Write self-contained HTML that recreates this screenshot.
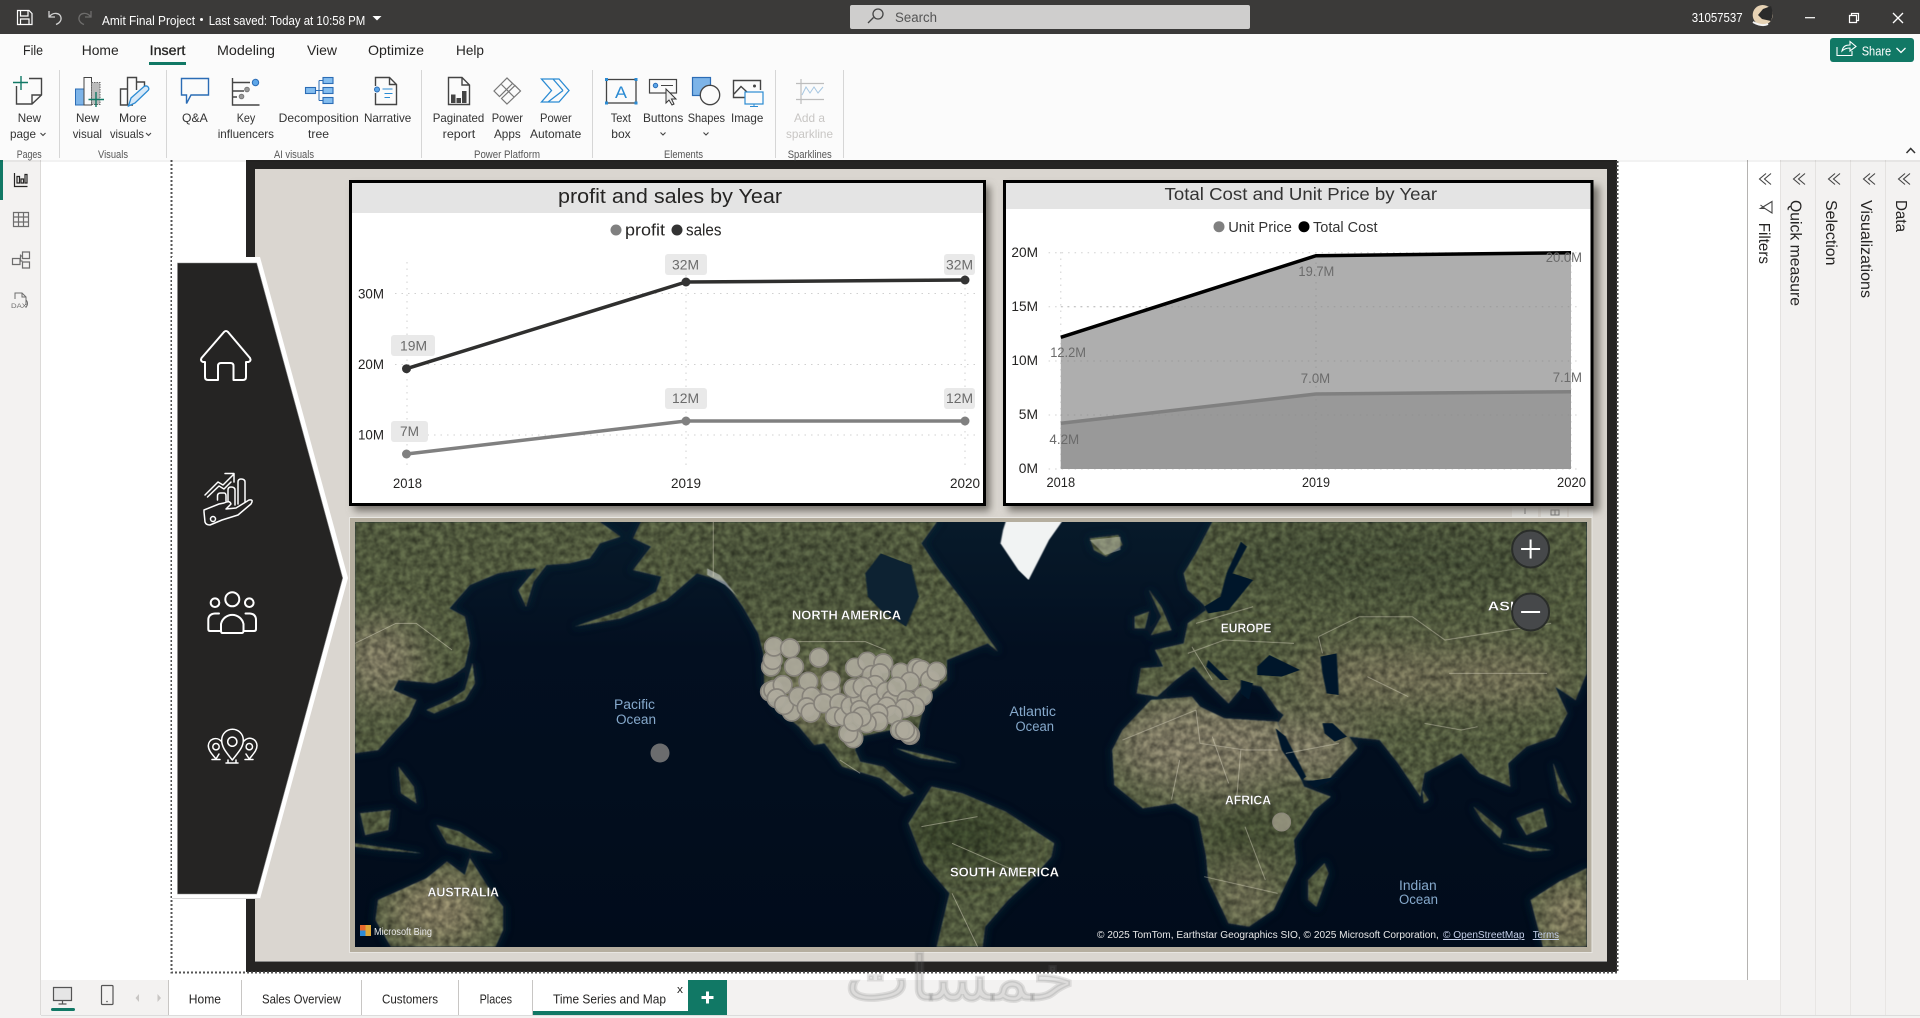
<!DOCTYPE html>
<html><head><meta charset="utf-8"><title>Power BI</title>
<style>
html,body{margin:0;padding:0;background:#fff;overflow:hidden}
svg{display:block;font-family:"Liberation Sans",sans-serif}
.w{fill:#fff;font-size:13px}
.r{fill:#333;font-size:12px}
.t{fill:#252423;font-size:14px}
.g{fill:#555;font-size:11px}
.v{fill:#252423;font-size:15.5px}
.a{fill:#252423;font-size:14px}
.d{fill:#6b6b6b;font-size:14px}
.b{fill:#fff;font-size:13px;font-weight:bold;stroke:#222;stroke-width:.2px}
.o{fill:#86a9cc;font-size:13.5px}
.c{fill:#e8e8e8;font-size:10px}
.p{fill:#252423;font-size:13px}
.ic{fill:none;stroke:#444;stroke-width:1.4}
.bl{fill:none;stroke:#2b6cb5;stroke-width:1.4}
.n{fill:none;stroke:#fff;stroke-width:2;stroke-linejoin:round;stroke-linecap:round}
.n2{fill:none;stroke:#fff;stroke-width:1.5;stroke-linejoin:round;stroke-linecap:round}
.bub circle{fill:#aeaa9c;fill-opacity:.92;stroke:#86827a;stroke-width:5}
</style></head><body>
<svg width="1920" height="1018" viewBox="0 0 1920 1018" xmlns="http://www.w3.org/2000/svg">
<defs>
<linearGradient id="oc" x1="0" y1="0" x2="0" y2="1"><stop offset="0" stop-color="#071a2a"/><stop offset=".3" stop-color="#030f20"/><stop offset="1" stop-color="#010c1b"/></linearGradient>
<filter id="bl4" x="-20%" y="-20%" width="140%" height="140%"><feGaussianBlur stdDeviation="4"/></filter>
<filter id="bl1" x="-5%" y="-5%" width="110%" height="110%"><feGaussianBlur stdDeviation="1"/></filter>
<filter id="bl20" x="-50%" y="-50%" width="200%" height="200%"><feGaussianBlur stdDeviation="18"/></filter>
<filter id="tex" x="0" y="0" width="100%" height="100%" color-interpolation-filters="sRGB">
<feTurbulence type="fractalNoise" baseFrequency=".16" numOctaves="3" seed="5" result="n"/>
<feColorMatrix in="n" type="matrix" values=".8 0 0 0 .36  .8 0 0 0 .36  .8 0 0 0 .36  0 0 0 0 1" result="g"/>
<feBlend in="SourceGraphic" in2="g" mode="multiply" result="m"/>
<feComposite in="m" in2="SourceGraphic" operator="in" result="c"/>
<feGaussianBlur in="c" stdDeviation=".6"/>
</filter>
<path id="d8" transform="translate(350,510) scale(.5102,.3333)" d="M10,36L490,36L530,80L490,100L470,145L430,160L385,165L360,215L345,290L330,240L365,175L330,180L290,190L235,225L195,295L225,320L235,400L225,470L200,500L165,520L130,515L95,510L85,540L130,570L115,620L90,660L55,720L10,730Z M150,600L195,570L225,540L240,460L245,520L225,570L165,610Z M95,770L125,830L130,880L100,850Z M20,910L80,900L75,960L30,975Z M170,945L215,965L280,1030L240,1020L190,1000Z M10,1000L100,1020L140,1030L60,1020L10,1010Z M55,1170L150,1105L190,1055L225,1095L235,1045L270,1130L300,1190L300,1260L285,1310L80,1310L50,1230Z M555,85L590,110L555,180L610,200L600,245L545,295L440,350L530,325L620,270L680,190L735,215L770,290L800,370L810,430L812,530L840,600L880,650L910,705L930,700L965,770L1040,805L1085,860L1105,850L1075,810L1045,770L1000,755L990,720L1000,680L1060,660L1085,655L1110,700L1115,650L1130,560L1170,510L1170,450L1250,400L1270,425L1240,360L1210,290L1150,170L1120,100L1150,36L570,36Z M1100,960L1095,940L1140,830L1200,850L1285,905L1380,1000L1375,1040L1340,1100L1290,1170L1245,1250L1240,1310L1150,1310L1175,1150L1125,1060Z M1070,715L1130,735L1190,760L1120,745Z"/>
<path id="d9" transform="translate(1000,510) scale(.4082,.3333)" d="M520,36L480,130L450,190L460,240L500,285L505,300L460,340L450,400L380,420L400,470L345,475L335,550L385,560L430,510L475,470L510,520L560,580L600,520L640,530L680,600L695,615L680,640L745,810L800,815L875,715L855,680L930,690L975,760L1030,860L1040,790L1130,730L1175,790L1250,830L1245,760L1290,710L1360,680L1390,610L1360,530L1410,570L1437,490L1437,36Z M275,720L300,660L370,570L470,560L490,590L550,625L680,635L745,830L810,860L770,900L720,990L725,1060L670,1200L610,1250L560,1240L510,1110L505,1040L485,920L430,880L350,895L280,825Z M755,1110L795,1060L805,1090L775,1190L755,1170Z M365,240L395,290L420,360L370,375L395,320Z M330,320L365,305L355,355L330,355Z M220,85L290,75L300,105L260,140L230,120Z M1160,890L1230,960L1225,985L1180,930Z M1265,925L1330,895L1340,950L1290,975Z M1230,1000L1350,1020L1300,1025Z M1355,760L1375,820L1400,880L1370,850Z M1300,1170L1370,1115L1437,1075L1437,1310L1330,1310Z M1035,840L1050,870L1038,880Z"/>
<clipPath id="land"><use href="#d8"/><use href="#d9"/></clipPath>
<clipPath id="mapc"><rect x="355" y="522" width="1232" height="425"/></clipPath>
</defs>

<!-- base -->
<rect width="1920" height="1018" fill="#fff"/>
<!-- right panes -->
<rect x="1780" y="160" width="140" height="855" fill="#f3f2f1"/>
<path d="M1780.500 160V1015M1815.500 160V1015M1850.500 160V1015M1885.500 160V1015" stroke="#e4e2e0"/>
<path d="M1747.500 160V980" stroke="#b5b3b1"/>
<!-- bottom strip -->
<rect x="41" y="980" width="1879" height="35" fill="#f3f2f1"/>
<path d="M1780.500 980V1015M1815.500 980V1015M1850.500 980V1015M1885.500 980V1015" stroke="#e8e6e4"/>
<rect y="1015" width="1920" height="1" fill="#dcdcdc"/><rect y="1016" width="1920" height="2" fill="#f3f2f1"/>

<!-- left nav -->
<rect y="160" width="41" height="858" fill="#f3f2f1"/><rect x="40" y="160" width="1" height="855" fill="#dcdad8"/>
<rect y="160" width="3" height="40" fill="#117865"/>
<path d="M14.500 173V186.500H27.500M17 183V176.500H19.500V183ZM21 183V179H23.500V183ZM25 183V174.500H27V183Z" fill="none" stroke="#252423" stroke-width="1.200"/>
<path d="M13.500 212.500H28.500V226.500H13.500ZM13.500 217H28.500M13.500 222H28.500M18.500 212.500V226.500M23.500 212.500V226.500" fill="none" stroke="#6d6d6d" stroke-width="1.200"/>
<path d="M12.500 258.500H20V264.500H12.500ZM22.500 252H29.500V258.500H22.500ZM22.500 262H29.500V268H22.500ZM20 261H22.500M20 256H22.500M20.500 254.500V261" fill="none" stroke="#6d6d6d" stroke-width="1.200"/>
<path d="M15 299V293H22L26 297V305M22 293V297H26M26 300C28 302 28 305 26 307" fill="none" stroke="#6d6d6d" stroke-width="1"/>
<text x="11" y="308" font-size="6.500" fill="#6d6d6d" textLength="16" lengthAdjust="spacingAndGlyphs">DAX</text>

<!-- report frame -->
<rect x="246" y="160" width="1371" height="812" fill="#252423"/>
<rect x="255" y="169" width="1352" height="793" fill="#dad6d0"/>
<rect x="255" y="961" width="1352" height="1" fill="#888"/>
<!-- dotted boundary -->
<path d="M171.500 160V972.500H1617.500V160" fill="none" stroke="#555" stroke-width="2" stroke-dasharray="2 2"/>

<!-- small headers behind map -->
<rect x="1512" y="500" width="26" height="17" fill="#e4e3e0"/><rect x="1541" y="500" width="26" height="17" fill="#e4e3e0"/><rect x="1569" y="500" width="24" height="17" fill="#e4e3e0"/>
<path d="M1525 508V514M1551 510H1559V515H1551ZM1555 510V515" stroke="#777" fill="none"/>

<!-- shadows -->
<rect x="354" y="186" width="636" height="325" fill="#74716a" filter="url(#bl4)"/>
<rect x="1008" y="186" width="591" height="325" fill="#74716a" filter="url(#bl4)"/>

<!-- chart 1 -->
<rect x="350.500" y="181.500" width="634" height="323" fill="#fff" stroke="#000" stroke-width="3"/>
<rect x="352" y="183" width="631" height="30" fill="#e4e4e4"/>
<text x="558" y="203" font-size="20" fill="#252423" textLength="224" lengthAdjust="spacingAndGlyphs">profit and sales by Year</text>
<circle cx="616" cy="230" r="5.500" fill="#808080"/><text x="625" y="235.500" font-size="16.500" fill="#252423" textLength="40" lengthAdjust="spacingAndGlyphs">profit</text>
<circle cx="677" cy="230" r="5.500" fill="#333"/><text x="686" y="235.500" font-size="16.500" fill="#252423" textLength="35.500" lengthAdjust="spacingAndGlyphs">sales</text>
<path d="M395 293.500H975M395 364.500H975M395 435H975M407 262V470M686 262V470M965 262V470" stroke="#d0d0d0" stroke-dasharray="1.500 5"/>
<g class="a">
<text x="358" y="298.500" textLength="26" lengthAdjust="spacingAndGlyphs">30M</text>
<text x="358" y="369" textLength="26" lengthAdjust="spacingAndGlyphs">20M</text>
<text x="358" y="439.500" textLength="26" lengthAdjust="spacingAndGlyphs">10M</text>
<text x="393" y="488" textLength="29" lengthAdjust="spacingAndGlyphs">2018</text>
<text x="671" y="488" textLength="30" lengthAdjust="spacingAndGlyphs">2019</text>
<text x="950" y="488" textLength="30" lengthAdjust="spacingAndGlyphs">2020</text>
</g>
<polyline points="406.500,368.700 686,282 965,280" fill="none" stroke="#2f2f2e" stroke-width="3.500"/>
<polyline points="406.500,454 686,421 965,421" fill="none" stroke="#808080" stroke-width="3.500"/>
<g fill="#333"><circle cx="406.500" cy="368.700" r="4.500"/><circle cx="686" cy="282" r="4.500"/><circle cx="965" cy="280" r="4.500"/></g>
<g fill="#808080"><circle cx="406.500" cy="454" r="4.500"/><circle cx="686" cy="421" r="4.500"/><circle cx="965" cy="421" r="4.500"/></g>
<g fill="#e9e9e9">
<rect x="391" y="335" width="44" height="21" rx="3"/><rect x="391" y="421" width="37" height="21" rx="3"/>
<rect x="665" y="254" width="42" height="21" rx="3"/><rect x="944" y="254" width="31" height="21" rx="3"/>
<rect x="665" y="388" width="42" height="21" rx="3"/><rect x="944" y="388" width="31" height="21" rx="3"/>
</g>
<g class="d">
<text x="400" y="350.500" textLength="27" lengthAdjust="spacingAndGlyphs">19M</text>
<text x="400" y="436" textLength="19" lengthAdjust="spacingAndGlyphs">7M</text>
<text x="672" y="269.500" textLength="27" lengthAdjust="spacingAndGlyphs">32M</text>
<text x="946" y="269.500" textLength="27" lengthAdjust="spacingAndGlyphs">32M</text>
<text x="672" y="403" textLength="27" lengthAdjust="spacingAndGlyphs">12M</text>
<text x="946" y="403" textLength="27" lengthAdjust="spacingAndGlyphs">12M</text>
</g>

<!-- chart 2 -->
<rect x="1004.500" y="181.500" width="587.500" height="323" fill="#fff" stroke="#000" stroke-width="3"/>
<rect x="1006" y="183" width="584.500" height="26" fill="#e4e4e4"/>
<text x="1164.500" y="200" font-size="17.500" fill="#333" textLength="272.600" lengthAdjust="spacingAndGlyphs">Total Cost and Unit Price by Year</text>
<circle cx="1219" cy="226.700" r="5.500" fill="#808080"/><text x="1228.200" y="232" font-size="15" fill="#333" textLength="63.700" lengthAdjust="spacingAndGlyphs">Unit Price</text>
<circle cx="1304" cy="226.700" r="5.500" fill="#000"/><text x="1313" y="232" font-size="15" fill="#333" textLength="64.500" lengthAdjust="spacingAndGlyphs">Total Cost</text>
<path d="M1048.600 252.700H1580M1048.600 306.700H1580M1048.600 361H1580M1048.600 415H1580M1048.600 469H1580M1060.800 252V469M1316 252V469M1571 252V469" stroke="#d0d0d0" stroke-dasharray="1.500 5"/>
<polygon points="1060.800,469 1060.800,337.300 1316,255.700 1571,252.700 1571,469" fill="#aeaeae"/>
<polygon points="1060.800,469 1060.800,423.300 1316,394 1571,391.700 1571,469" fill="#999"/>
<path d="M1060.800 306.700H1571M1060.800 361H1571M1060.800 415H1571M1316 256V469" stroke="#8a8a8a" stroke-opacity=".55" stroke-dasharray="1.500 5"/>
<polyline points="1060.800,337.300 1316,255.700 1571,252.700" fill="none" stroke="#000" stroke-width="3.500"/>
<polyline points="1060.800,423.300 1316,394 1571,391.700" fill="none" stroke="#808080" stroke-width="3.500"/>
<g class="a">
<text x="1011.400" y="257" textLength="26.600" lengthAdjust="spacingAndGlyphs">20M</text>
<text x="1011.400" y="311" textLength="26.600" lengthAdjust="spacingAndGlyphs">15M</text>
<text x="1011.400" y="365" textLength="26.600" lengthAdjust="spacingAndGlyphs">10M</text>
<text x="1018.800" y="419" textLength="19.200" lengthAdjust="spacingAndGlyphs">5M</text>
<text x="1018.800" y="473" textLength="19.200" lengthAdjust="spacingAndGlyphs">0M</text>
<text x="1046.500" y="487" textLength="28.600" lengthAdjust="spacingAndGlyphs">2018</text>
<text x="1302" y="487" textLength="28" lengthAdjust="spacingAndGlyphs">2019</text>
<text x="1557" y="487" textLength="29" lengthAdjust="spacingAndGlyphs">2020</text>
</g>
<g class="d">
<text x="1050.200" y="357" textLength="35.800" lengthAdjust="spacingAndGlyphs">12.2M</text>
<text x="1298.400" y="276" textLength="35.900" lengthAdjust="spacingAndGlyphs">19.7M</text>
<text x="1545.700" y="262" textLength="36.300" lengthAdjust="spacingAndGlyphs">20.0M</text>
<text x="1300.800" y="383" textLength="29.400" lengthAdjust="spacingAndGlyphs">7.0M</text>
<text x="1552.700" y="382" textLength="29.300" lengthAdjust="spacingAndGlyphs">7.1M</text>
<text x="1049.400" y="444" textLength="29.800" lengthAdjust="spacingAndGlyphs">4.2M</text>
</g>

<!-- nav polygon -->
<polygon points="172,257 260,257 348,578 260,899 172,899" fill="#fff"/>
<path d="M172 898.500H260" stroke="#d8d8d8"/>
<polygon points="177.500,263 256.700,263 342.700,578 256.700,894 177.500,894" fill="#252423" stroke="#8a8a8a" stroke-width=".6"/>
<path class="n" d="M205 362H203Q200 361 201.500 358L224 332Q226 330 228 332L250 358Q251.500 361 248.500 362H246V377Q246 380 243 380H233.500V366Q233.500 363 230.500 363H221Q218 363 218 366V380H208Q205 380 205 377Z"/>
<g class="n2">
<path d="M205 495L218 482L223 485L234 474M225 473.500H234V482"/>
<path d="M207.500 497L219 486L224 489L231 482"/>
<path d="M217.500 500V496Q217.500 493 220.500 493H224Q226 493 226 496V501"/>
<path d="M228 501V490Q228 487 231 487Q235 487 235 490V505"/>
<path d="M238 504V482Q238 479 241 479Q245 479 245 482V502"/>
<path d="M204 510L219 504L224 503Q230 500 231 504L226 509L236 508L249 500Q254 499 251 504L238 515L222 520L210 525Q206 525 205 522L204 512Z"/>
<circle cx="213" cy="519" r="2.500"/>
</g>
<g class="n">
<circle cx="232.300" cy="599.300" r="7"/><circle cx="215" cy="602.700" r="4.300"/><circle cx="249.300" cy="602.700" r="4.300"/>
<path d="M222 633H242Q243.500 633 243.500 630V624A11.500 11.500 0 0 0 221 624V630Q221 633 222 633Z"/>
<path d="M221 631H210Q208.300 631 208.300 629V620Q208.300 614 215 613.500H219"/>
<path d="M243.500 631H254Q256 631 256 629V620Q256 614 250 613.500H245.500"/>
</g>
<g class="n2">
<path d="M232.300 760C226 752 221.500 747 221.700 740A10.800 10.800 0 0 1 243.300 740C243.500 747 238.500 752 232.300 760Z"/>
<circle cx="232.300" cy="741.700" r="4.600"/>
<path d="M216 759C211 753 208.300 750 208.300 745.500A7.300 7.300 0 0 1 221 741M216 759L219 754"/>
<circle cx="216" cy="746.700" r="3.200"/>
<path d="M249.300 759C254 753 257 750 257 745.500A7.300 7.300 0 0 0 244 741M249.300 759L246 754"/>
<circle cx="249.300" cy="746.700" r="3.200"/>
<path d="M226 763H238M228 760V763M236 760V763M212 759.500H220M245 759.500H253"/>
</g>

<!-- map frame -->
<rect x="349.500" y="517.500" width="1242.500" height="435" fill="#b5ae9f" stroke="#e8e6e2"/>
<g clip-path="url(#mapc)">
<rect x="355" y="522" width="1232" height="425" fill="url(#oc)"/>
<g filter="url(#bl4)" stroke="#102636" fill="#102636" opacity=".7" style="stroke-width:12px"><use href="#d8"/><use href="#d9"/></g>
<g filter="url(#tex)">
<g clip-path="url(#land)">
<rect x="355" y="522" width="1232" height="425" fill="#697450"/>
<g filter="url(#bl20)">
<ellipse cx="1205" cy="745" rx="95" ry="48" fill="#a09a7e"/>
<ellipse cx="1318" cy="750" rx="40" ry="30" fill="#a09a7e"/>
<ellipse cx="1390" cy="677" rx="100" ry="28" fill="#928d6d"/>
<ellipse cx="1490" cy="677" rx="80" ry="28" fill="#928d6d"/>
<ellipse cx="439" cy="910" rx="50" ry="35" fill="#a99f7c"/>
<ellipse cx="1570" cy="915" rx="30" ry="35" fill="#a99f7c"/>
<ellipse cx="380" cy="660" rx="40" ry="40" fill="#a09a7c"/>
<ellipse cx="810" cy="700" rx="40" ry="30" fill="#8f8c6c"/>
<ellipse cx="1245" cy="895" rx="30" ry="30" fill="#8f8c6c"/>
<ellipse cx="962" cy="835" rx="60" ry="30" fill="#465434"/>
<ellipse cx="1242" cy="830" rx="35" ry="25" fill="#505c3b"/>
<ellipse cx="1390" cy="560" rx="170" ry="35" fill="#5a6647"/>
<ellipse cx="800" cy="570" rx="110" ry="35" fill="#616c4b"/>
</g>
</g></g>
<!-- seas -->
<g fill="#06182a" filter="url(#bl1)" transform="translate(1000,510) scale(.4082,.3333)">
<path d="M630,470L660,435L735,480L690,500L630,495Z"/>
<path d="M785,440L825,430L830,555L800,550L790,490Z"/>
<path d="M555,190L590,95L605,110L570,190L620,210L560,300L510,310L500,290L540,260Z"/>
<path d="M790,640L815,640L850,680L820,695L795,670Z"/>
<path d="M510,450L560,510L540,510L505,470Z"/>
<path d="M590,510L620,520L610,570L590,550Z"/>
<path d="M675,655L700,680L750,800L740,810L690,720Z"/>
<path d="M750,815L830,800L770,835Z"/>
</g>
<g filter="url(#bl1)" transform="translate(350,510) scale(.5102,.3333)">
<path d="M1010,190L1040,130L1100,165L1115,260L1090,350L1040,300L1015,260Z" fill="#0a2030"/>
<path d="M1285,36L1395,36L1370,90L1330,210L1310,180L1275,100L1280,60Z" fill="#f1f3f3"/>
<path d="M1450,90L1510,80L1510,120L1480,135Z" fill="#d8d8c8" opacity=".4"/>
<path d="M700,175L725,195L760,260L735,225L700,195Z" fill="#d9dcdc" opacity=".55"/>
</g>
<g fill="none" stroke="#ddd9c5" stroke-opacity=".45" stroke-width="1">
<g transform="translate(1000,510) scale(.4082,.3333)">
<path vector-effect="non-scaling-stroke" d="M300,690L480,600M480,600L490,700L600,720L680,720M440,750L420,870M590,720L580,860M500,1100L680,1150M600,950L650,1110M780,380L880,320L1010,320L1090,390L1350,340M780,380L790,430M900,500L1000,560M1040,640L1130,660L1170,650M460,430L550,390L720,400M480,340L620,290M520,680L560,820M700,730L830,700M1100,490L1340,490M470,410L520,510"/>
</g>
<g transform="translate(350,510) scale(.5102,.3333)">
<path vector-effect="non-scaling-stroke" d="M712,36L712,200M870,395L1010,395L1050,420M1120,950L1230,920M1180,1000L1300,1080M1180,1150L1230,1310M10,400L90,340L130,340L200,420M960,750L1000,790"/>
</g>
</g>
<!-- labels -->
<text class="b" x="792" y="619.500" textLength="109" lengthAdjust="spacingAndGlyphs">NORTH AMERICA</text>
<text class="b" x="1220.800" y="632.500" textLength="50.600" lengthAdjust="spacingAndGlyphs">EUROPE</text>
<text class="b" x="1225" y="804.500" textLength="46" lengthAdjust="spacingAndGlyphs">AFRICA</text>
<text class="b" x="1487.800" y="610.500" textLength="38" lengthAdjust="spacingAndGlyphs">ASIA</text>
<text class="b" x="950" y="876.500" textLength="109" lengthAdjust="spacingAndGlyphs">SOUTH AMERICA</text>
<text class="b" x="427.500" y="896.500" textLength="71.500" lengthAdjust="spacingAndGlyphs">AUSTRALIA</text>
<g class="o">
<text x="614" y="709" textLength="41" lengthAdjust="spacingAndGlyphs">Pacific</text>
<text x="616" y="724" textLength="40" lengthAdjust="spacingAndGlyphs">Ocean</text>
<text x="1009.400" y="716" textLength="46.600" lengthAdjust="spacingAndGlyphs">Atlantic</text>
<text x="1015.500" y="731" textLength="38.500" lengthAdjust="spacingAndGlyphs">Ocean</text>
<text x="1399" y="890" textLength="37.700" lengthAdjust="spacingAndGlyphs">Indian</text>
<text x="1399" y="904" textLength="39" lengthAdjust="spacingAndGlyphs">Ocean</text>
</g>
<!-- bubbles -->
<circle cx="660" cy="753" r="9.500" fill="#777" fill-opacity=".9"/>
<circle cx="1281.600" cy="822" r="9" fill="#a5a18f" fill-opacity=".75" stroke="#8a867a"/>
<g class="bub" transform="translate(760,620) scale(.3333)">
<circle cx="33" cy="140" r="28"/><circle cx="38" cy="120" r="28"/><circle cx="42" cy="80" r="28"/><circle cx="90" cy="85" r="28"/><circle cx="177" cy="113" r="28"/><circle cx="102" cy="140" r="28"/><circle cx="145" cy="185" r="28"/><circle cx="212" cy="212" r="28"/><circle cx="212" cy="182" r="28"/><circle cx="285" cy="143" r="28"/><circle cx="322" cy="125" r="28"/><circle cx="370" cy="130" r="28"/><circle cx="335" cy="165" r="28"/><circle cx="360" cy="160" r="28"/><circle cx="422" cy="158" r="28"/><circle cx="470" cy="145" r="28"/><circle cx="485" cy="150" r="28"/><circle cx="450" cy="185" r="28"/><circle cx="510" cy="180" r="28"/><circle cx="530" cy="155" r="28"/><circle cx="345" cy="195" r="28"/><circle cx="488" cy="228" r="28"/><circle cx="30" cy="215" r="28"/><circle cx="40" cy="210" r="28"/><circle cx="68" cy="195" r="28"/><circle cx="50" cy="235" r="28"/><circle cx="95" cy="275" r="28"/><circle cx="72" cy="255" r="28"/><circle cx="115" cy="230" r="28"/><circle cx="155" cy="230" r="28"/><circle cx="140" cy="262" r="28"/><circle cx="152" cy="278" r="28"/><circle cx="190" cy="250" r="28"/><circle cx="238" cy="250" r="28"/><circle cx="225" cy="290" r="28"/><circle cx="252" cy="290" r="28"/><circle cx="272" cy="258" r="28"/><circle cx="300" cy="235" r="28"/><circle cx="280" cy="205" r="28"/><circle cx="308" cy="200" r="28"/><circle cx="330" cy="225" r="28"/><circle cx="350" cy="250" r="28"/><circle cx="378" cy="215" r="28"/><circle cx="395" cy="240" r="28"/><circle cx="410" cy="200" r="28"/><circle cx="440" cy="240" r="28"/><circle cx="465" cy="260" r="28"/><circle cx="432" cy="265" r="28"/><circle cx="380" cy="260" r="28"/><circle cx="400" cy="285" r="28"/><circle cx="300" cy="270" r="28"/><circle cx="355" cy="280" r="28"/><circle cx="355" cy="305" r="28"/><circle cx="320" cy="310" r="28"/><circle cx="305" cy="290" r="28"/><circle cx="280" cy="355" r="28"/><circle cx="265" cy="340" r="28"/><circle cx="280" cy="305" r="28"/><circle cx="450" cy="345" r="28"/><circle cx="445" cy="340" r="28"/><circle cx="420" cy="330" r="28"/><circle cx="435" cy="330" r="28"/>
</g>
<!-- attribution -->
<rect x="360" y="925" width="5.500" height="5.500" fill="#e8692d"/><rect x="365.500" y="925" width="5.500" height="5.500" fill="#e0a838"/><rect x="360" y="930.500" width="5.500" height="5.500" fill="#2e8bd6"/><rect x="365.500" y="930.500" width="5.500" height="5.500" fill="#e0a838"/>
<text x="374" y="935" fill="#e8e8e8" font-size="10.500" textLength="58" lengthAdjust="spacingAndGlyphs">Microsoft Bing</text>
<text class="c" x="1097" y="938" textLength="341.800" lengthAdjust="spacingAndGlyphs">© 2025 TomTom, Earthstar Geographics SIO, © 2025 Microsoft Corporation,</text>
<text class="c" x="1443" y="938" textLength="81.500" lengthAdjust="spacingAndGlyphs" text-decoration="underline" style="fill:#c5d0ea">© OpenStreetMap</text>
<text class="c" x="1532.700" y="938" textLength="26.300" lengthAdjust="spacingAndGlyphs" text-decoration="underline" style="fill:#c5d0ea">Terms</text>
<!-- zoom buttons -->
<circle cx="1530.600" cy="549" r="18.500" fill="#46484a" stroke="#2a2d2a" stroke-width="2"/>
<path d="M1530.600 539.500V558.500M1521.100 549H1540.100" stroke="#fff" stroke-width="2"/>
<circle cx="1530.600" cy="612" r="18.500" fill="#46484a" stroke="#2a2d2a" stroke-width="2"/>
<path d="M1521.100 612H1540.100" stroke="#fff" stroke-width="2"/>
</g>

<!-- title bar -->
<rect width="1920" height="34" fill="#3b3a39"/>
<path d="M17.500 10.500H29L32 13.500V24.500H17.500ZM20.500 10.500V16H28V10.500M20.500 24.500V19H29V24.500" fill="none" stroke="#fff" stroke-width="1.200"/>
<path d="M49 11V17H55M49.500 16.500C53 12 60 12.500 61 17.500C61.500 20 60 23 56 24.500" fill="none" stroke="#d0d0d0" stroke-width="1.300"/>
<path d="M91 11V17H85M90.500 16.500C87 12 80 12.500 79 17.500C78.500 20 80 23 84 24.500" fill="none" stroke="#6e6d6c" stroke-width="1.300"/>
<text class="w" x="102" y="25" textLength="93" lengthAdjust="spacingAndGlyphs">Amit Final Project</text>
<circle cx="201.500" cy="19.500" r="1.500" fill="#fff"/>
<text class="w" x="208.700" y="25" textLength="156.600" lengthAdjust="spacingAndGlyphs">Last saved: Today at 10:58 PM</text>
<polygon points="372.500,16 381.500,16 377,20.500" fill="#fff"/>
<rect x="850" y="5" width="400" height="24" rx="2" fill="#cfcecd"/>
<path d="M868 23L873.500 17.500" stroke="#444" stroke-width="1.300"/><circle cx="878" cy="14" r="5" fill="none" stroke="#444" stroke-width="1.300"/>
<text x="895" y="22" font-size="13.500" fill="#555" textLength="42" lengthAdjust="spacingAndGlyphs">Search</text>
<text class="w" x="1691.700" y="22" textLength="51" lengthAdjust="spacingAndGlyphs">31057537</text>
<circle cx="1762.700" cy="15" r="10" fill="#e6d2b4"/><path d="M1763 9L1771 6Q1774 14 1771 21L1762 19L1758 15Z" fill="#2a2a2a"/><path d="M1753 22Q1762 27 1768 24" stroke="#f4f4f4" stroke-width="2" fill="none"/>
<path d="M1805 17.700H1815" stroke="#fff" stroke-width="1.200"/>
<path d="M1849.500 15.500H1856.500V22.500H1849.500ZM1851.500 15.500V13.500H1858.500V20.500H1856.500" fill="none" stroke="#fff" stroke-width="1.200"/>
<path d="M1893 13L1903 23M1903 13L1893 23" stroke="#fff" stroke-width="1.300"/>

<!-- ribbon -->
<rect y="34" width="1920" height="126" fill="#fbfbfb"/>
<rect y="160" width="1920" height="2" fill="#000" opacity=".05"/>
<g class="t">
<text x="23" y="55" textLength="20" lengthAdjust="spacingAndGlyphs">File</text>
<text x="81.700" y="55" textLength="37" lengthAdjust="spacingAndGlyphs">Home</text>
<text x="149.700" y="55" textLength="35.600" lengthAdjust="spacingAndGlyphs" stroke="#252423" stroke-width=".3">Insert</text>
<text x="217" y="55" textLength="58" lengthAdjust="spacingAndGlyphs">Modeling</text>
<text x="307" y="55" textLength="30" lengthAdjust="spacingAndGlyphs">View</text>
<text x="368" y="55" textLength="56" lengthAdjust="spacingAndGlyphs">Optimize</text>
<text x="456" y="55" textLength="28" lengthAdjust="spacingAndGlyphs">Help</text>
</g>
<rect x="149" y="62" width="37" height="3" fill="#117865"/>
<rect x="1830" y="38" width="84" height="24" rx="3" fill="#117865"/>
<path d="M1837 47V55.500H1852V51M1842 51C1843 46 1846 45 1850 45V41.500L1856 46.500L1850 51V48C1846 48 1844 49 1842 51Z" fill="none" stroke="#fff" stroke-width="1.100"/>
<text x="1861.700" y="55.500" font-size="13" fill="#fff" textLength="29.500" lengthAdjust="spacingAndGlyphs">Share</text>
<path d="M1896.500 48L1901 52.500L1905.500 48" fill="none" stroke="#fff" stroke-width="1.300"/>
<path d="M1906.500 153L1910.700 148.500L1915 153" fill="none" stroke="#333" stroke-width="1.500"/>
<path d="M59.500 70V158M166.500 70V158M421.500 70V158M592.500 70V158M775.500 70V158M843.500 70V158" stroke="#d6d6d6"/>

<g class="r">
<text x="17.700" y="122" textLength="23.300" lengthAdjust="spacingAndGlyphs">New</text>
<text x="10" y="138" textLength="26" lengthAdjust="spacingAndGlyphs">page</text>
<text x="76" y="122" textLength="23.300" lengthAdjust="spacingAndGlyphs">New</text>
<text x="72.700" y="138" textLength="29.300" lengthAdjust="spacingAndGlyphs">visual</text>
<text x="119" y="122" textLength="27.700" lengthAdjust="spacingAndGlyphs">More</text>
<text x="110" y="138" textLength="34" lengthAdjust="spacingAndGlyphs">visuals</text>
<text x="182" y="122" textLength="25.700" lengthAdjust="spacingAndGlyphs">Q&amp;A</text>
<text x="236.700" y="122" textLength="18.600" lengthAdjust="spacingAndGlyphs">Key</text>
<text x="217.700" y="138" textLength="56.300" lengthAdjust="spacingAndGlyphs">influencers</text>
<text x="278.700" y="122" textLength="80" lengthAdjust="spacingAndGlyphs">Decomposition</text>
<text x="308" y="138" textLength="21" lengthAdjust="spacingAndGlyphs">tree</text>
<text x="364" y="122" textLength="47.300" lengthAdjust="spacingAndGlyphs">Narrative</text>
<text x="432.700" y="122" textLength="51.600" lengthAdjust="spacingAndGlyphs">Paginated</text>
<text x="442.700" y="138" textLength="32.600" lengthAdjust="spacingAndGlyphs">report</text>
<text x="491.700" y="122" textLength="31.300" lengthAdjust="spacingAndGlyphs">Power</text>
<text x="494" y="138" textLength="26.700" lengthAdjust="spacingAndGlyphs">Apps</text>
<text x="540" y="122" textLength="31.700" lengthAdjust="spacingAndGlyphs">Power</text>
<text x="530" y="138" textLength="51.300" lengthAdjust="spacingAndGlyphs">Automate</text>
<text x="610.700" y="122" textLength="20.300" lengthAdjust="spacingAndGlyphs">Text</text>
<text x="611.300" y="138" textLength="19.400" lengthAdjust="spacingAndGlyphs">box</text>
<text x="643" y="122" textLength="40.300" lengthAdjust="spacingAndGlyphs">Buttons</text>
<text x="687.700" y="122" textLength="37.300" lengthAdjust="spacingAndGlyphs">Shapes</text>
<text x="731" y="122" textLength="32.300" lengthAdjust="spacingAndGlyphs">Image</text>
<text x="794" y="122" textLength="31" lengthAdjust="spacingAndGlyphs" style="fill:#c8c6c4">Add a</text>
<text x="786" y="138" textLength="47" lengthAdjust="spacingAndGlyphs" style="fill:#c8c6c4">sparkline</text>
</g>
<path d="M40.500 133L43 135.500L45.500 133M146 133L148.500 135.500L151 133M660.500 132.500L663 135L665.500 132.500M703.500 132.500L706 135L708.500 132.500" fill="none" stroke="#444" stroke-width="1.100"/>
<g class="g">
<text x="16.700" y="158" textLength="25" lengthAdjust="spacingAndGlyphs">Pages</text>
<text x="98" y="158" textLength="30" lengthAdjust="spacingAndGlyphs">Visuals</text>
<text x="274" y="158" textLength="40" lengthAdjust="spacingAndGlyphs">AI visuals</text>
<text x="474" y="158" textLength="66" lengthAdjust="spacingAndGlyphs">Power Platform</text>
<text x="664" y="158" textLength="39" lengthAdjust="spacingAndGlyphs">Elements</text>
<text x="787.700" y="158" textLength="44" lengthAdjust="spacingAndGlyphs">Sparklines</text>
</g>

<!-- ribbon icons -->
<path class="ic" d="M29 78.500H41.500V95L32 104H16.500V86M32 104V95H41.500"/>
<path d="M21 76V90M13 82.500H28" stroke="#117865" stroke-width="1.400"/>
<rect x="75.500" y="89" width="8.500" height="16" fill="#7db4e8" stroke="#2b6cb5"/>
<rect x="84" y="77.500" width="7.500" height="27.500" fill="#fbfbfb" stroke="#444"/>
<rect x="91.500" y="82.500" width="8.500" height="22" fill="#bbb" stroke="#666" stroke-dasharray="1.500 1"/>
<path d="M96 92V107M88.500 99.500H104" stroke="#117865" stroke-width="1.400"/>
<path class="ic" d="M120.500 105V89H127.500V105ZM127.500 105V77.500H136.500V90M136.500 82H144.500V88M128 105H133"/>
<path d="M128.500 106L131 98L144 86.500Q147 85 148.500 87.500Q149.500 89.500 147.500 91L135 103Z" fill="#d8e9f8" stroke="#2b8bd3" stroke-width="1.300"/>
<path class="bl" d="M181.500 78.500H208.500V95H191L186.500 103.500V95H181.500Z"/>
<path class="ic" d="M232.500 78V105H259.500M232.500 82.500H250M232.500 91H244M232.500 97H237"/>
<circle cx="255.500" cy="82.500" r="3.200" fill="#5da6e8" stroke="#2b6cb5"/><circle cx="247" cy="89.500" r="2.300" fill="#999" stroke="#777"/><circle cx="241.500" cy="96.500" r="2.300" fill="#999" stroke="#777"/>
<g fill="#83bdef" stroke="#2b6cb5" stroke-width="1.100"><rect x="305.500" y="87.500" width="10" height="6"/><rect x="323" y="77.500" width="10" height="6"/><rect x="323" y="87.500" width="10" height="6"/><rect x="323" y="97.500" width="10" height="6"/></g>
<path d="M315.500 90.500H323M319 80.500V100.500M319 80.500H323M319 100.500H323" stroke="#2b6cb5" fill="none"/>
<path class="ic" d="M375.500 86V77.500H389.500L396.500 84.500V104.500H375.500V93M389.500 77.500V84.500H396.500"/>
<circle cx="377" cy="89.500" r="2.500" fill="#5da6e8" stroke="#2b6cb5"/><path d="M382.500 89H392.500M384.500 93.500H392.500M384.500 97.500H390" stroke="#2b8bd3"/>
<path class="ic" stroke="#333" d="M448.500 77.500H462L469.500 85V104.500H448.500ZM462 77.500V85H469.500"/>
<path d="M451 103H455.500V94.500H451ZM456.500 103H461V98H456.500ZM462 103H466.500V91H462Z" fill="#444"/>
<g fill="none" stroke="#777" stroke-width="1.200"><path d="M494 91L507 78L512.500 83.500L499.500 96.500ZM507 104L520.500 91L515 85.500L501.500 98.500ZM507 78L520.500 91M501.500 84.500L514.500 97.500"/></g>
<path d="M541.500 79H559L569 90.500L559 102H541.500L551.500 90.500ZM553 79L563 90.500M548 102L563 90.500" fill="none" stroke="#2b8bd3" stroke-width="1.300"/>
<rect x="606.500" y="79.500" width="29.500" height="23.500" fill="none" stroke="#444" stroke-width="1.300"/>
<g fill="#2b8bd3"><rect x="605" y="78" width="3" height="3"/><rect x="634.500" y="78" width="3" height="3"/><rect x="605" y="101.500" width="3" height="3"/><rect x="634.500" y="101.500" width="3" height="3"/></g>
<text x="615" y="98" font-size="17" fill="#2b8bd3" textLength="12" lengthAdjust="spacingAndGlyphs">A</text>
<rect x="649.500" y="79.500" width="27" height="13.500" fill="none" stroke="#444" stroke-width="1.200"/>
<circle cx="655.500" cy="85.500" r="2.200" fill="#5da6e8" stroke="#2b6cb5"/><path d="M661 85.500H673" stroke="#444"/>
<path d="M666 89V103L669 100L672 105L674 104L671.500 99H676Z" fill="#eee" stroke="#333"/>
<rect x="692.500" y="77.500" width="18" height="18" fill="#7db4e8" stroke="#2b6cb5" stroke-width="1.200"/>
<circle cx="710" cy="95" r="9.700" fill="#fbfbfb" stroke="#444" stroke-width="1.300"/>
<path class="ic" d="M745 97.500H733.500V80.500H760.500V90M734 94L741 86.500L747 92"/><circle cx="754.500" cy="86" r="1.500" fill="#444"/>
<rect x="745" y="92" width="18" height="12" fill="#fbfbfb" stroke="#2b8bd3" stroke-width="1.200"/><path d="M754 104V107M750 106.500H758" stroke="#2b8bd3"/>
<path d="M796 83.500H824M796 99.500H824M801 79V104" stroke="#bdbdbd" stroke-width="1.200" fill="none"/>
<path d="M802 95L806 87L810 93L814 87L818 93L823 87" fill="none" stroke="#a8c8e2"/>

<!-- panes text -->
<g fill="none" stroke="#444" stroke-width="1.100">
<path d="M1766 173.500L1759.500 179L1766 184.500M1771 173.500L1764.500 179L1771 184.500"/>
<path d="M1800 173.500L1793.500 179L1800 184.500M1805 173.500L1798.500 179L1805 184.500"/>
<path d="M1835 173.500L1828.500 179L1835 184.500M1840 173.500L1833.500 179L1840 184.500"/>
<path d="M1870 173.500L1863.500 179L1870 184.500M1875 173.500L1868.500 179L1875 184.500"/>
<path d="M1905 173.500L1898.500 179L1905 184.500M1910 173.500L1903.500 179L1910 184.500"/>
<path d="M1772 201.500V213L1765 208.500H1760.500ZM1765 208.500L1760.500 205"/>
</g>
<g class="v">
<text transform="translate(1759,222.700) rotate(90)" textLength="41.300" lengthAdjust="spacingAndGlyphs">Filters</text>
<text transform="translate(1790.500,200) rotate(90)" textLength="106" lengthAdjust="spacingAndGlyphs">Quick measure</text>
<text transform="translate(1826,200) rotate(90)" textLength="65.500" lengthAdjust="spacingAndGlyphs">Selection</text>
<text transform="translate(1861,200) rotate(90)" textLength="98" lengthAdjust="spacingAndGlyphs">Visualizations</text>
<text transform="translate(1896,200) rotate(90)" textLength="32" lengthAdjust="spacingAndGlyphs">Data</text>
</g>

<!-- tab strip -->
<rect x="168" y="980" width="520" height="35" fill="#fff"/>
<path d="M168.500 980V1015M241.500 980V1015M361.500 980V1015M458.500 980V1015M532.500 980V1015" stroke="#c8c6c4"/>
<rect x="533" y="1011" width="155" height="4" fill="#117865"/>
<rect x="688" y="980" width="39" height="35" fill="#117865"/>
<path d="M707.500 991.500V1003.500M701.500 997.500H713.500" stroke="#fff" stroke-width="3"/>
<g class="p">
<text x="188.800" y="1003.500" textLength="32.200" lengthAdjust="spacingAndGlyphs">Home</text>
<text x="262" y="1003.500" textLength="79" lengthAdjust="spacingAndGlyphs">Sales Overview</text>
<text x="382" y="1003.500" textLength="56" lengthAdjust="spacingAndGlyphs">Customers</text>
<text x="479.600" y="1003.500" textLength="32.400" lengthAdjust="spacingAndGlyphs">Places</text>
<text x="553" y="1003.500" textLength="113" lengthAdjust="spacingAndGlyphs">Time Series and Map</text>
<text x="677" y="993" textLength="6" lengthAdjust="spacingAndGlyphs" font-size="11">x</text>
</g>
<path d="M53.500 987.500H71.500V1000.500H53.500ZM62.500 1000.500V1004M58.500 1004H66.500" fill="#e6e6e6" stroke="#555" stroke-width="1.200"/>
<rect x="51" y="1008" width="24" height="3" rx="1.500" fill="#117865"/>
<rect x="101.500" y="985.500" width="11.500" height="19" rx="1" fill="none" stroke="#555" stroke-width="1.200"/><circle cx="107" cy="1001.500" r=".8" fill="#555"/>
<path d="M139 994L135.500 998L139 1002ZM157.500 994L161 998L157.500 1002Z" fill="#c8c6c4"/>

<!-- watermark -->
<text x="845" y="1000" font-family="'DejaVu Sans',sans-serif" font-size="62" fill="#6a6a6a" fill-opacity=".17" stroke="#6a6a6a" stroke-opacity=".17" stroke-width="3" textLength="230" lengthAdjust="spacingAndGlyphs" direction="rtl" style="unicode-bidi:bidi-override" xml:lang="ar" dx="230">خمسات</text>
</svg>
</body></html>
